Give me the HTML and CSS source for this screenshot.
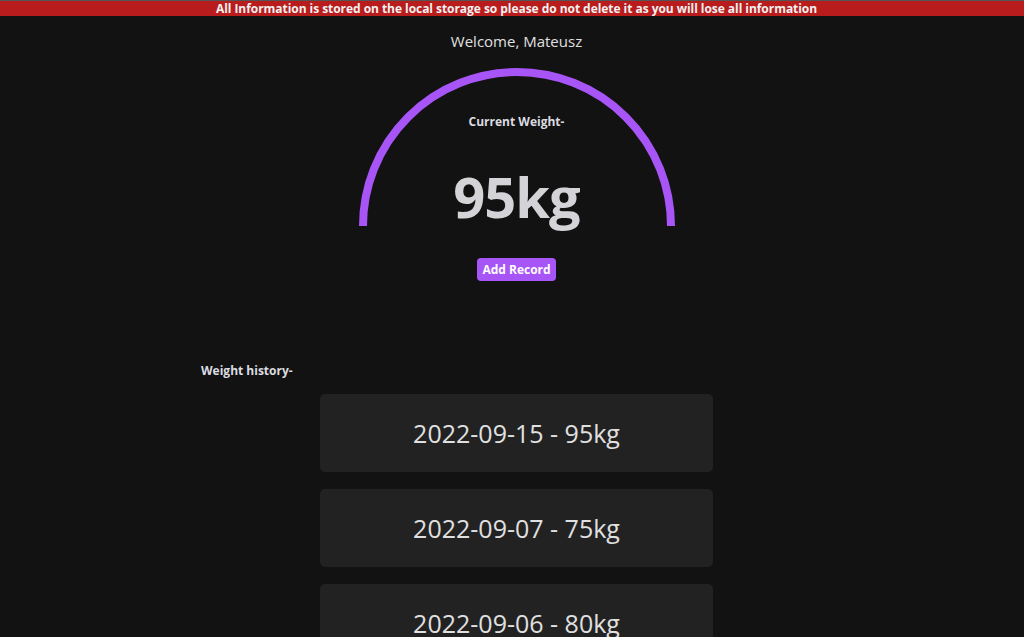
FILE: index.html
```html
<!DOCTYPE html>
<html>
<head>
<meta charset="utf-8">
<link rel="stylesheet" href="styles.css">
</head>
<body>
<div class="page">
  <div class="banner">All Information is stored on the local storage so please do not delete it as you will lose all information</div>
  <div class="welcome">Welcome, Mateusz</div>
  <div class="gauge">
    <svg class="arc" width="316" height="160" viewBox="0 0 316 160">
      <path d="M 4 158 A 154 154 0 0 1 312 158" fill="none" stroke="#a855f7" stroke-width="8"/>
    </svg>
    <div class="gauge-label">Current Weight-</div>
    <div class="gauge-value">95kg</div>
  </div>
  <div class="actions"><button class="add-btn">Add Record</button></div>
  <div class="history">
    <div class="history-title">Weight history-</div>
    <div class="cards">
      <div class="card">2022-09-15 - 95kg</div>
      <div class="card">2022-09-07 - 75kg</div>
      <div class="card">2022-09-06 - 80kg</div>
    </div>
  </div>
</div>
</body>
</html>
```
FILE: styles.css
```css
html, body {
  margin: 0;
  padding: 0;
  background: #121212;
  height: 637px;
  overflow: hidden;
}
body {
  font-family: "Open Sans", "Noto Sans", sans-serif;
  color: #e4e4e7;
}
.page {
  padding-left: 9px;
  border-top: 1px solid #555;
}
.banner {
  background: #b91c1c;
  color: #f1f1f1;
  font-weight: 700;
  font-size: 12px;
  line-height: 15px;
  text-align: center;
  letter-spacing: -0.05px;
  margin-left: -9px;
  padding-left: 9px;
}
.welcome {
  text-align: center;
  font-size: 15px;
  line-height: 20px;
  margin-top: 15px;
  color: #e0e0e0;
}
.gauge {
  position: relative;
  width: 316px;
  height: 160px;
  margin: 17px auto 0;
  display: flex;
  flex-direction: column;
  align-items: center;
}
.arc {
  position: absolute;
  left: 0;
  top: 0;
}
.gauge-label {
  margin-top: 46px;
  font-size: 12px;
  font-weight: 700;
  line-height: 16px;
  color: #dcdce0;
}
.gauge-value {
  margin-top: 34px;
  font-size: 56px;
  font-weight: 700;
  line-height: 64px;
  color: #d4d4d8;
  letter-spacing: -1px;
}
.actions {
  display: flex;
  justify-content: center;
  margin-top: 30px;
}
.add-btn {
  background: #a855f7;
  color: #fff;
  border: none;
  border-radius: 4px;
  font-family: "Open Sans", "Noto Sans", sans-serif;
  font-weight: 700;
  font-size: 12px;
  line-height: 17px;
  padding: 3px 5px;
  width: 79px;
}
.history {
  width: 631px;
  margin: 82px auto 0;
}
.history-title {
  font-size: 12px;
  font-weight: 700;
  line-height: 16px;
  color: #dcdce0;
}
.cards {
  display: flex;
  flex-direction: column;
  align-items: center;
  gap: 17px;
  margin-top: 15px;
}
.card {
  width: 393px;
  height: 78px;
  background: #222222;
  border-radius: 5px;
  display: flex;
  align-items: center;
  justify-content: center;
  font-size: 25px;
  color: #e0e0e0;
}
```
